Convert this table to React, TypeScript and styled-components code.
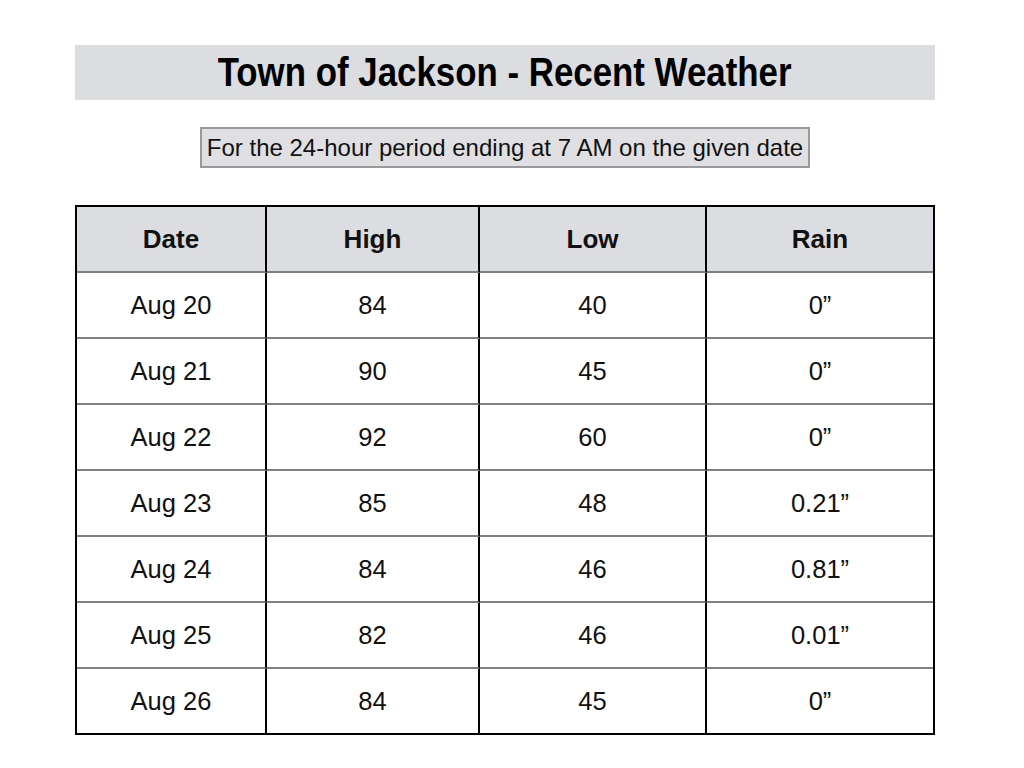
import React from "react";
import styled, { createGlobalStyle } from "styled-components";

const Global = createGlobalStyle`
  html, body { margin: 0; padding: 0; background: #ffffff; }
  body { font-family: "Liberation Sans", Arial, Helvetica, sans-serif; color: #111; }
`;

const Page = styled.div`
  width: 860px;
  margin-left: 75px;
  padding-top: 45px;
  display: flex;
  flex-direction: column;
  align-items: center;
`;

const TitleBand = styled.div`
  width: 100%;
  height: 55px;
  background: #dcdde0;
  display: flex;
  align-items: center;
  justify-content: center;
`;

const Title = styled.h1`
  margin: 0;
  font-family: "Liberation Sans Narrow", "Arial Narrow", "Liberation Sans", sans-serif;
  font-weight: 700;
  font-size: 41px;
  line-height: 1;
  color: #000;
  white-space: nowrap;
  transform: scaleX(0.85);
`;

const Note = styled.div`
  margin-top: 27px;
  box-sizing: border-box;
  height: 41px;
  padding: 0 5px;
  border: 2px solid #9a9a9c;
  background: #e0e0e3;
  display: flex;
  align-items: center;
  font-size: 24px;
  color: #111;
  white-space: nowrap;
`;

const Grid = styled.div`
  margin-top: 37px;
  width: 860px;
  box-sizing: border-box;
  border: 2px solid #000;
  display: grid;
  grid-template-columns: 190px 213px 227px 226px;
`;

const Cell = styled.div<{ $head?: boolean; $lastCol?: boolean; $lastRow?: boolean }>`
  box-sizing: border-box;
  height: ${(p) => (p.$lastRow ? "64px" : "66px")};
  display: flex;
  align-items: center;
  justify-content: center;
  background: ${(p) => (p.$head ? "#dcdde0" : "#ffffff")};
  border-right: ${(p) => (p.$lastCol ? "none" : "2px solid #000")};
  border-bottom: ${(p) => (p.$lastRow ? "none" : "2px solid #808080")};
  font-size: ${(p) => (p.$head ? "26px" : "25.5px")};
  font-weight: ${(p) => (p.$head ? 700 : 400)};
  color: #111;
`;

const headers = ["Date", "High", "Low", "Rain"];
const rows = [
  ["Aug 20", "84", "40", "0\u201D"],
  ["Aug 21", "90", "45", "0\u201D"],
  ["Aug 22", "92", "60", "0\u201D"],
  ["Aug 23", "85", "48", "0.21\u201D"],
  ["Aug 24", "84", "46", "0.81\u201D"],
  ["Aug 25", "82", "46", "0.01\u201D"],
  ["Aug 26", "84", "45", "0\u201D"],
];

export default function App() {
  return (
    <>
      <Global />
      <Page>
        <TitleBand>
          <Title>Town of Jackson - Recent Weather</Title>
        </TitleBand>
        <Note>For the 24-hour period ending at 7 AM on the given date</Note>
        <Grid>
          {headers.map((h, i) => (
            <Cell key={h} $head $lastCol={i === 3}>
              {h}
            </Cell>
          ))}
          {rows.map((r, ri) =>
            r.map((v, ci) => (
              <Cell key={`${ri}-${ci}`} $lastCol={ci === 3} $lastRow={ri === rows.length - 1}>
                {v}
              </Cell>
            ))
          )}
        </Grid>
      </Page>
    </>
  );
}
